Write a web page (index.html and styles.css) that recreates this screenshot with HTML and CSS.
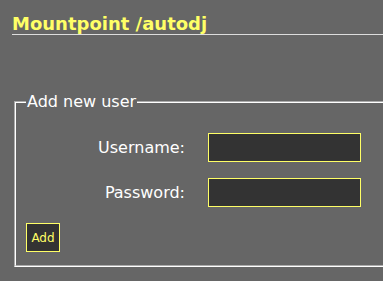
FILE: index.html
```html
<!DOCTYPE html>
<html lang="en">
<head>
<meta charset="UTF-8" />
<title>Mountpoint /autodj</title>
<link rel="stylesheet" href="styles.css">
</head>
<body>
<div id="content">
    <h2 class="mount-title">Mountpoint /autodj</h2>

    <form class="user-form">
        <fieldset>
            <legend>Add new user</legend>
            <div class="form-grid">
                <label for="username">Username:</label>
                <input type="text" id="username" name="username">
                <label for="password">Password:</label>
                <input type="password" id="password" name="password">
            </div>
            <button type="submit" class="btn">Add</button>
        </fieldset>
    </form>
</div>
</body>
</html>
```

FILE: styles.css
```css
html, body {
    overflow: hidden;
}

body {
    margin: 0;
    padding: 0;
    background-color: #666666;
    color: #ffffff;
    font-family: 'DejaVu Sans', Verdana, sans-serif;
}

#content {
    width: 376px;
    padding: 13px 0 0 12px;
}

.mount-title {
    margin: 0;
    font-size: 18px;
    font-weight: bold;
    line-height: 21px;
    color: #ffff66;
    border-bottom: 1px solid #dddddd;
}

.user-form {
    margin: 57px 0 0;
}

.user-form fieldset {
    margin: 0 2px;
    padding: 22px 10px 13px;
    border: 2px groove #ffffff;
}

.user-form legend {
    padding: 0 1px;
    margin-left: 0;
    font-size: 16px;
    line-height: 19px;
}

.form-grid {
    display: grid;
    grid-template-columns: 159px 153px;
    column-gap: 23px;
    row-gap: 16px;
    align-items: center;
}

.form-grid label {
    text-align: right;
    font-size: 16px;
}

.form-grid input {
    box-sizing: border-box;
    width: 153px;
    height: 29px;
    margin: 0;
    padding: 2px 4px;
    background: #333333;
    border: 1px solid #ffff66;
    color: #ffff66;
    font-family: 'DejaVu Sans', Verdana, sans-serif;
}

.btn {
    display: block;
    box-sizing: border-box;
    width: 34px;
    height: 29px;
    margin-top: 16px;
    padding: 0;
    background: #333333;
    border: 1px solid #ffff66;
    color: #ffff66;
    font-family: 'DejaVu Sans', Verdana, sans-serif;
    font-size: 12px;
}
```
